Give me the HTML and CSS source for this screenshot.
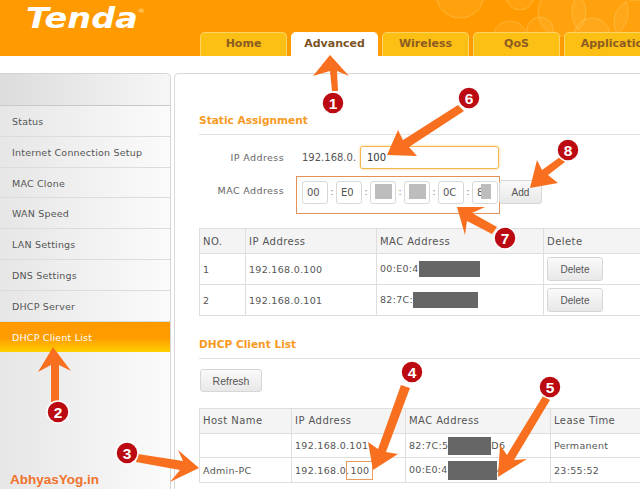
FILE: index.html
```html
<!DOCTYPE html>
<html lang="en">
<head>
<meta charset="utf-8">
<title>Tenda DHCP</title>
<link rel="stylesheet" href="styles.css">
</head>
<body>
<div class="page">
  <header class="top">
    <svg class="bubbles" viewBox="0 0 640 56" aria-hidden="true">
      <g fill="#ffc94d" fill-opacity=".18" stroke="#ffd98a" stroke-opacity=".35">
        <circle cx="460" cy="-6" r="24"/><circle cx="520" cy="-4" r="14"/><circle cx="510" cy="38" r="17"/>
        <circle cx="562" cy="12" r="24"/><circle cx="600" cy="12" r="28"/><circle cx="592" cy="36" r="18"/>
        <circle cx="636" cy="22" r="22"/><circle cx="540" cy="30" r="13"/>
      </g>
    </svg>
    <div class="logo">Tenda<sup class="reg">®</sup></div>
    <nav class="tabs">
      <a class="tab">Home</a>
      <a class="tab active">Advanced</a>
      <a class="tab">Wireless</a>
      <a class="tab">QoS</a>
      <a class="tab wide">Applications</a>
    </nav>
  </header>

  <div class="body-row">
    <aside class="side">
      <div class="side-head"></div>
      <ul class="menu">
        <li>Status</li>
        <li>Internet Connection Setup</li>
        <li>MAC Clone</li>
        <li>WAN Speed</li>
        <li>LAN Settings</li>
        <li>DNS Settings</li>
        <li>DHCP Server</li>
        <li class="on">DHCP Client List</li>
      </ul>
    </aside>

    <main class="panel">
      <h2 class="title">Static Assignment</h2>
      <div class="form">
        <div class="row">
          <label class="lab">IP Address</label>
          <span class="prefix">192.168.0.</span>
          <span class="ipbox">100</span>
        </div>
        <div class="row mac-row">
          <label class="lab">MAC Address</label>
          <div class="macframe">
            <span class="oct">00</span><i>:</i>
            <span class="oct">E0</span><i>:</i>
            <span class="oct masked">4<b class="m1"></b></span><i>:</i>
            <span class="oct masked">0<b class="m2"></b></span><i>:</i>
            <span class="oct">0C</span><i>:</i>
            <span class="oct masked">8<b class="m3"></b></span>
          </div>
          <button class="btn add">Add</button>
        </div>
      </div>

      <table class="grid t1">
        <colgroup><col class="c11"><col class="c12"><col class="c13"><col class="c14"></colgroup>
        <tr class="head"><th>NO.</th><th>IP Address</th><th>MAC Address</th><th>Delete</th></tr>
        <tr><td>1</td><td>192.168.0.100</td><td>00:E0:4<span class="redact r1"></span></td><td><button class="btn del">Delete</button></td></tr>
        <tr><td>2</td><td>192.168.0.101</td><td>82:7C:<span class="redact r2"></span></td><td><button class="btn del">Delete</button></td></tr>
      </table>

      <h2 class="title second">DHCP Client List</h2>
      <button class="btn refresh">Refresh</button>

      <table class="grid t2">
        <colgroup><col class="c21"><col class="c22"><col class="c23"><col class="c24"></colgroup>
        <tr class="head"><th>Host Name</th><th>IP Address</th><th>MAC Address</th><th>Lease Time</th></tr>
        <tr><td></td><td>192.168.0.101</td><td>82:7C:5<span class="redact r3"></span>D6</td><td>Permanent</td></tr>
        <tr><td>Admin-PC</td><td>192.168.0.<span class="mark">100</span></td><td>00:E0:4<span class="redact r4"></span>4</td><td>23:55:52</td></tr>
      </table>
    </main>
  </div>

  <svg class="notes" viewBox="0 0 640 489" aria-hidden="true">
    <g class="arrows">
      <polygon points="330,55 349,76 337,71 338,91 332,91 330,71 313,76"/>
      <polygon points="53,347 71,371 59,365 59,402 51,402 51,365 38,372"/>
      <polygon points="199,468 170,482 180,470 136,462 138,454 183,461 178,450"/>
      <polygon points="373,470 368,442 378,449 401,385 410,388 386,452 398,454"/>
      <polygon points="498,477 500,445 507,455 543,396 550,400 514,460 527,459"/>
      <polygon points="387,155 398,130 403,140 458,105 464,111 409,147 417,156"/>
      <polygon points="457,207 485,207 472,213 497,227 492,234 467,221 465,235"/>
      <polygon points="530,188 537,160 542,170 560,157 565,162 548,175 558,183"/>
    </g>
    <g class="badge">
      <circle cx="333" cy="103" r="11"/><text x="333" y="108.5">1</text>
      <circle cx="58" cy="412" r="11"/><text x="58" y="417.5">2</text>
      <circle cx="127" cy="453" r="11"/><text x="127" y="458.5">3</text>
      <circle cx="412" cy="372" r="11"/><text x="412" y="377.5">4</text>
      <circle cx="550" cy="387" r="11"/><text x="550" y="392.5">5</text>
      <circle cx="469" cy="98" r="11"/><text x="469" y="103.5">6</text>
      <circle cx="505" cy="238" r="11"/><text x="505" y="243.5">7</text>
      <circle cx="568" cy="150" r="11"/><text x="568" y="155.5">8</text>
    </g>
    <text class="wm" x="10" y="484">AbhyasYog.in</text>
  </svg>
</div>
</body>
</html>
```
FILE: styles.css
```css
* { box-sizing: border-box; }
html, body { margin: 0; padding: 0; }
body { background: #fff; font-family: "DejaVu Sans", sans-serif; color: #555; }
.page { position: relative; width: 640px; height: 489px; overflow: hidden; }

.top { position: relative; height: 56px; background: #ff9a00; }
.bubbles { position: absolute; inset: 0; width: 640px; height: 56px; }
.logo {
  position: absolute; left: 26px; top: 0;
  font: italic bold 27.5px/36px "DejaVu Sans", sans-serif;
  color: #fff; transform: scaleX(1.22); transform-origin: left center;
}
.reg { font-size: 6px; font-style: normal; font-weight: normal; vertical-align: 15px; line-height: 0; color: #ffe2b0; }
.tabs { position: absolute; left: 200px; top: 32px; display: flex; gap: 4px; }
.tab {
  flex: none; width: 87px; height: 24px; text-align: center;
  font: bold 11px/22px "DejaVu Sans", sans-serif; color: #8c5c22;
  background: #fcbf14; border: 1px solid #fbd466; border-bottom: 0; border-radius: 5px 5px 0 0;
}
.tab.active { background: #fff; border-color: #fff; color: #7c5526; }
.tab.wide { width: 110px; white-space: nowrap; }

.body-row { display: flex; gap: 3px; margin-top: 17px; height: 416px; }
.side {
  flex: none; width: 171px; border: 1px solid #d4d4d4; border-width: 1px 1px 0 0; border-radius: 0 5px 0 0;
  background: linear-gradient(90deg, #e6e6e6, #fbfbfb);
}
.side-head { height: 32px; border-bottom: 1px solid #c8c8c8; background: linear-gradient(90deg, #dcdcdc, #f6f6f6); border-radius: 0 5px 0 0; }
.menu { list-style: none; margin: 0; padding: 0; }
.menu li {
  height: 30.8px; padding-left: 12px; font-size: 9.5px; letter-spacing: .2px; line-height: 31px; color: #555;
  border-bottom: 1px solid #dcdcdc; white-space: nowrap;
}
.menu li.on {
  color: #fff; border-bottom: 0;
  background: linear-gradient(#ff9900 0%, #ff9d00 55%, #ffcf00 100%);
}

.panel {
  flex: none; width: 480px; padding: 38px 0 0 24px; overflow: hidden;
  border: 1px solid #d8d8d8; border-width: 1px 0 0 1px; border-radius: 5px 0 0 0;
}
.title {
  margin: 0; height: 23px; width: 456px; font-size: 10.6px; line-height: 16px; font-weight: bold; color: #f79a1e;
  border-bottom: 1px solid #e2e2e2;
}
.title.second { margin-top: 20px; }

.form { margin-top: 11px; font-size: 10px; }
.row { display: flex; align-items: center; height: 23px; }
.lab { flex: none; width: 85px; text-align: right; color: #666; font-size: 9.5px; letter-spacing: .4px; }
.prefix { margin-left: 18px; width: 58px; flex: none; font-size: 10px; color: #555; white-space: nowrap; }
.ipbox {
  width: 139px; height: 23px; padding-left: 6px; line-height: 21px; color: #333; background: #fff;
  border: 1px solid #f4b64a; border-radius: 3px; box-shadow: 0 0 3px #f9cf85;
}
.mac-row { margin-top: 7px; height: 38px; align-items: flex-start; }
.mac-row .lab { margin-top: 9px; }
.macframe {
  flex: none; width: 204px; height: 38px; margin-left: 12px; padding: 4px 0 0 5px;
  display: flex; align-items: flex-start; border: 1px solid #e0925a;
}
.macframe i { flex: none; width: 8px; text-align: center; font-style: normal; line-height: 22px; font-size: 9px; color: #777; }
.oct {
  flex: none; position: relative; width: 26px; height: 23px; padding-left: 4px; line-height: 21px;
  background: #fff; border: 1px solid #d8d8d8; border-radius: 3px; font-size: 10px; color: #555;
}
.oct b { display: block; position: absolute; top: 2px; bottom: 4px; background: #bdbdbd; }
.m1 { left: 4px; right: 3px; }
.m2 { left: 4px; right: 3px; }
.m3 { left: 8px; right: 6px; }

.btn {
  font-family: "Liberation Sans", sans-serif; font-size: 10px; color: #555; padding: 0;
  background: linear-gradient(#fafafa, #e8e8e8); border: 1px solid #d6d6d6; border-radius: 3px;
}
.add { flex: none; width: 43px; height: 24px; margin: 4px 0 0 -1px; }
.del { width: 56px; height: 24px; }
.refresh { display: block; width: 62px; height: 23px; margin: 10px 0 0 1px; font-size: 10.5px; }

.grid { border-collapse: collapse; table-layout: fixed; margin-top: 14px; width: 470px; font-size: 9.5px; letter-spacing: .3px; color: #555; }
.grid th, .grid td { border: 1px solid #dedede; padding: 0 0 0 3px; text-align: left; font-weight: normal; white-space: nowrap; }
.grid .head th { background: #f4f4f4; font-size: 10px; letter-spacing: .45px; }
.t1 tr { height: 31px; }
.t1 tr.head { height: 25px; }
.t2 tr { height: 24.7px; }
.c11 { width: 46px; } .c12 { width: 131px; } .c13 { width: 167px; } .c14 { width: 126px; }
.c21 { width: 92px; } .c22 { width: 114px; } .c23 { width: 145px; } .c24 { width: 119px; }
.t2 { margin-top: 16px; }
.redact { display: inline-block; vertical-align: middle; background: #666; height: 16px; }
.r1 { width: 61px; }
.r2 { width: 65px; }
.r3 { width: 43px; height: 18px; }
.r4 { width: 49px; height: 19px; }
.mark { outline: 1px solid #e89a60; outline-offset: 3px; margin-left: 1px; }

.notes { position: absolute; inset: 0; width: 640px; height: 489px; pointer-events: none; }
.arrows polygon { fill: #f8701f; }
.badge circle { fill: #bb0a12; stroke: #fff; stroke-width: 1.5; }
.badge text { fill: #fff; font: bold 15.5px "Liberation Sans", sans-serif; text-anchor: middle; }
.wm { fill: #f0722c; font: bold 13.5px "Liberation Sans", sans-serif; }
```
